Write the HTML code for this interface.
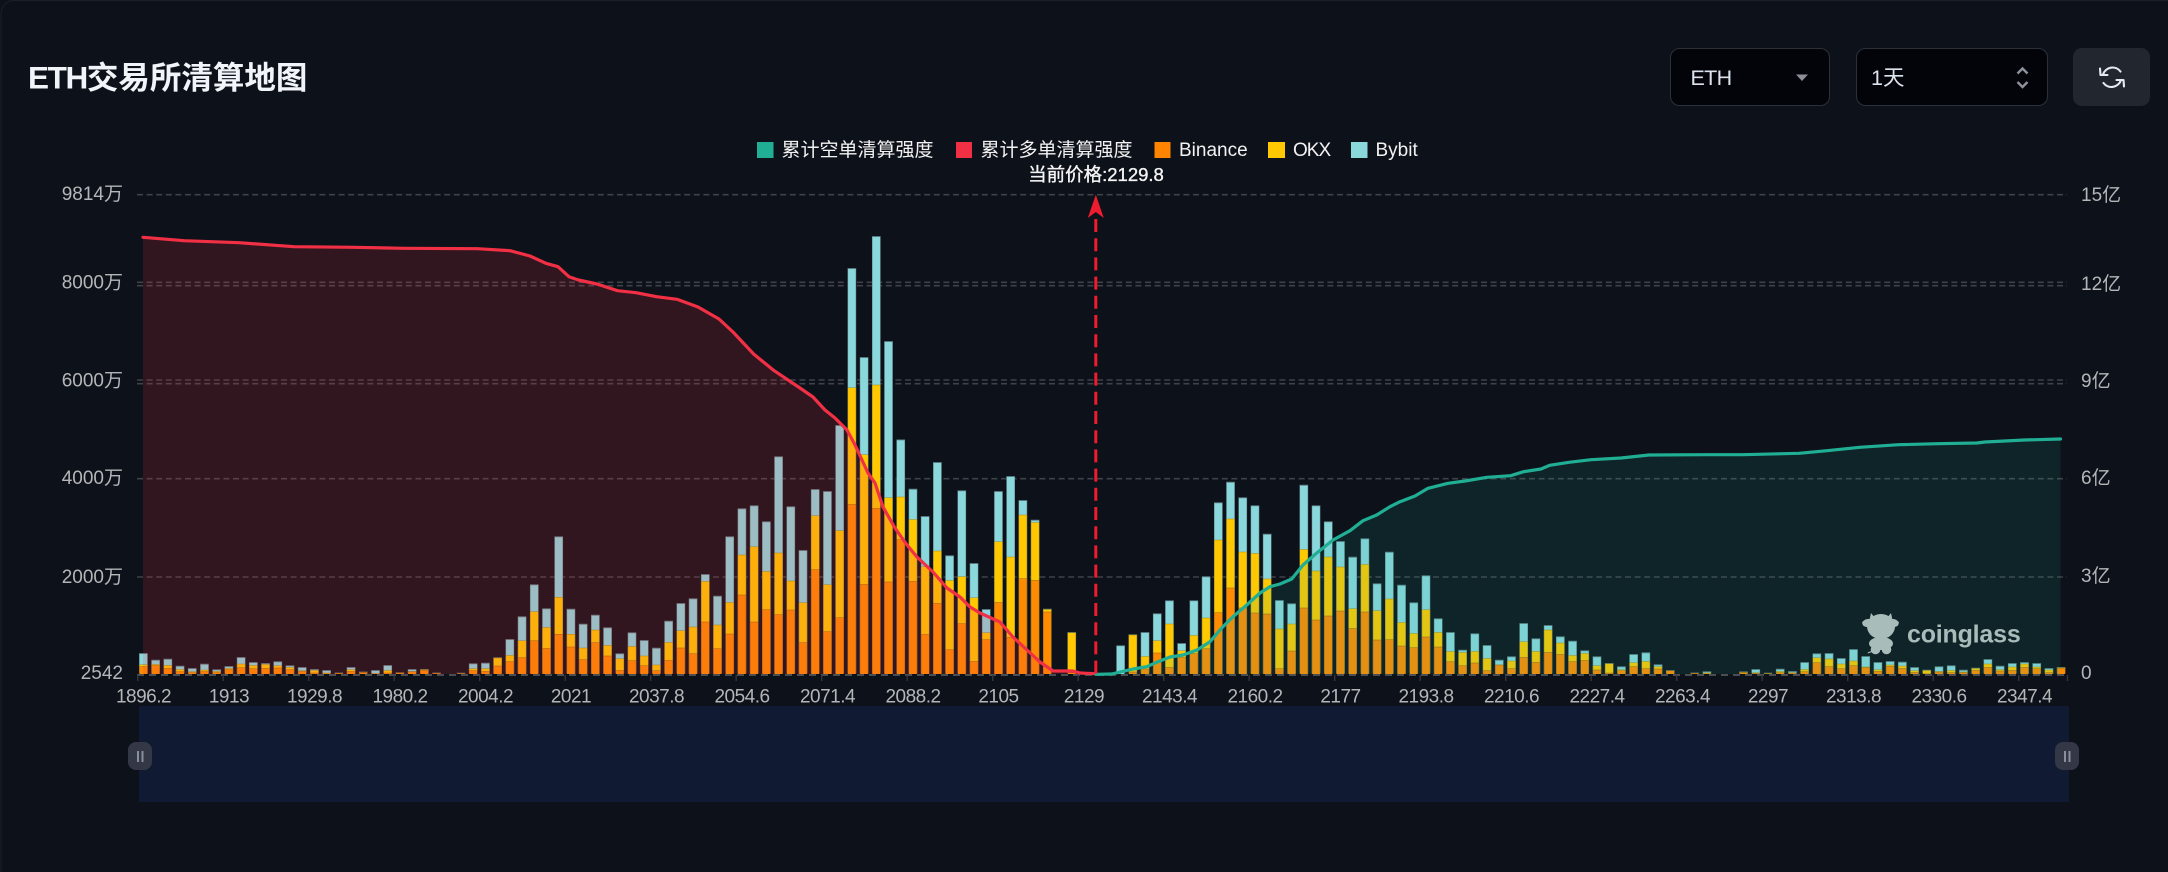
<!DOCTYPE html>
<html lang="zh">
<head>
<meta charset="utf-8">
<title>ETH交易所清算地图</title>
<style>
html,body{margin:0;padding:0;background:#0d1119;width:2168px;height:872px;overflow:hidden}
svg{display:block}
text{font-family:"Liberation Sans","Noto Sans CJK SC",sans-serif}
.ax{font-size:19px;fill:#b4b6b8}
.xl{font-size:19px;fill:#b4b6b8;text-anchor:middle;letter-spacing:-.5px}
.lg{font-size:19px;fill:#f2f2f2}
</style>
</head>
<body>
<svg width="2168" height="872" viewBox="0 0 2168 872" xmlns="http://www.w3.org/2000/svg">
<defs>
<path id="c" d="M0 0v-20m1 20v-13.3m1 13.3v-14.3m1 14.3v-7.3m1 7.3v-5m1 5v-9.3m1 9.3v-3.7m1 3.7v-7m1 7v-16m1 16v-11m1 11v-10m1 10v-11.7m1 11.7v-7.7m1 7.7v-6m1 6v-4m1 4v-3m1 3v-.5m1 .5v-6m1 6v-1.5m1 1.5v-3m1 3v-8m1 8v-.7m1 .7v-4m1 4v-4m1 4v-.5m1 .5m1 0v-.3m1 .3v-9.7m1 9.7v-10.3m1 10.3v-15.7m1 15.7v-34m1 34v-56.7m1 56.7v-88.7m1 88.7v-64.7m1 64.7v-136.7m1 136.7v-64.3m1 64.3v-49.3m1 49.3v-58.3m1 58.3v-45.7m1 45.7v-19.7m1 19.7v-40.7m1 40.7v-33m1 33v-25.3m1 25.3v-52.3m1 52.3v-70m1 70v-74.7m1 74.7v-99m1 99v-77.3m1 77.3v-136.7m1 136.7v-164.7m1 164.7v-167.7m1 167.7v-151.7m1 151.7v-216.7m1 216.7v-166.7m1 166.7v-123m1 123v-184m1 184v-182m1 182v-248m1 248v-405m1 405v-316m1 316v-437m1 437v-332m1 332v-233.6m1 233.6v-184.3m1 184.3v-157m1 157v-211m1 211v-117.7m1 117.7v-182.7m1 182.7v-110m1 110v-64m1 64v-182m1 182v-197m1 197v-173m1 173v-153.3m1 153.3v-64.3m1 64.3m1 0v-41m1 41m1 0m1 0m1 0v-27.7m1 27.7v-38.7m1 38.7v-41m1 41v-59.7m1 59.7v-72.7m1 72.7v-30m1 30v-72.7m1 72.7v-96.7m1 96.7v-170.7m1 170.7v-191.3m1 191.3v-175.7m1 175.7v-167.7m1 167.7v-139.3m1 139.3v-73m1 73v-69.7m1 69.7v-188.3m1 188.3v-167.7m1 167.7v-151.7m1 151.7v-132m1 132v-116.3m1 116.3v-134.7m1 134.7v-89.7m1 89.7v-121.3m1 121.3v-88.3m1 88.3v-70.7m1 70.7v-97.7m1 97.7v-54.7m1 54.7v-41m1 41v-23.3m1 23.3v-39.7m1 39.7v-28m1 28v-13.3m1 13.3v-16.7m1 16.7v-50m1 50v-34.7m1 34.7v-48m1 48v-36.7m1 36.7v-32.3m1 32.3v-22.7m1 22.7v-16.7m1 16.7v-10m1 10v-6.7m1 6.7v-19m1 19v-20.7m1 20.7v-8.7m1 8.7v-3m1 3m1 0v-.5m1 .5v-1.7m1 1.7m1 0m1 0v-1.6m1 1.6v-4m1 4v-.3m1 .3v-4.3m1 4.3v-2m1 2v-11m1 11v-19.7m1 19.7v-20m1 20v-15m1 15v-24m1 24v-17m1 17v-11m1 11v-12m1 12v-11.3m1 11.3v-6m1 6v-3.3m1 3.3v-6.7m1 6.7v-7.7m1 7.7v-3.3m1 3.3v-5.3m1 5.3v-14m1 14v-7.3m1 7.3v-10m1 10v-11m1 11v-10m1 10v-5m1 5v-6"/>
<path id="y" d="M0 0v-9m1 9v-9.3m1 9.3v-8.3m1 8.3v-4.3m1 4.3v-2m1 2v-3.7m1 3.7v-2.3m1 2.3v-5.3m1 5.3v-9.7m1 9.7v-8.3m1 8.3v-9.3m1 9.3v-8m1 8v-6.3m1 6.3v-3m1 3v-3.3m1 3.3v-.7m1 .7v-.5m1 .5v-4m1 4v-1.5m1 1.5v-.3m1 .3v-3.3m1 3.3v-.7m1 .7v-2.3m1 2.3v-4m1 4v-.5m1 .5m1 0v-.3m1 .3v-5m1 5v-5m1 5v-15.7m1 15.7v-18.3m1 18.3v-33m1 33v-62m1 62v-46.3m1 46.3v-76.5m1 76.5v-39.5m1 39.5v-25.7m1 25.7v-43.7m1 43.7v-28.3m1 28.3v-15m1 15v-27.3m1 27.3v-17.7m1 17.7v-8.7m1 8.7v-31.3m1 31.3v-43m1 43v-46.7m1 46.7v-92.3m1 92.3v-48.7m1 48.7v-71.3m1 71.3v-118.7m1 118.7v-127m1 127v-102.3m1 102.3v-120.7m1 120.7v-92.7m1 92.7v-71m1 71v-158m1 158v-89m1 89v-143m1 143v-286m1 286v-219m1 219v-288.7m1 288.7v-176m1 176v-176.7m1 176.7v-154.3m1 154.3v-107m1 107v-122.7m1 122.7v-93.3m1 93.3v-97m1 97v-76m1 76v-41m1 41v-132m1 132v-116.7m1 116.7v-158.7m1 158.7v-151.3m1 151.3v-64.3m1 64.3m1 0v-41m1 41m1 0m1 0m1 0m1 0v-38.7m1 38.7v-17.3m1 17.3v-33m1 33v-49.7m1 49.7v-23m1 23v-38.3m1 38.3v-55.7m1 55.7v-133.7m1 133.7v-154.7m1 154.7v-121.7m1 121.7v-120.3m1 120.3v-94.7m1 94.7v-44.7m1 44.7v-49.7m1 49.7v-124.3m1 124.3v-102.7m1 102.7v-116.7m1 116.7v-106.7m1 106.7v-65m1 65v-109.3m1 109.3v-63m1 63v-74.7m1 74.7v-51.3m1 51.3v-40.3m1 40.3v-64m1 64v-41.3m1 41.3v-22.3m1 22.3v-21.3m1 21.3v-22.3m1 22.3v-15.3m1 15.3v-8.7m1 8.7v-12.7m1 12.7v-32m1 32v-22.3m1 22.3v-43.7m1 43.7v-30.7m1 30.7v-18.3m1 18.3v-20.3m1 20.3v-8m1 8v-10m1 10v-4m1 4v-11m1 11v-12.3m1 12.3v-7m1 7v-3m1 3m1 0v-.5m1 .5v-.7m1 .7m1 0m1 0v-1.6m1 1.6v-1m1 1v-.3m1 .3v-2.3m1 2.3v-1m1 1v-4.3m1 4.3v-16m1 16v-14.7m1 14.7v-9.7m1 9.7v-12.7m1 12.7v-6.7m1 6.7v-4m1 4v-8.7m1 8.7v-7.7m1 7.7v-3m1 3v-3.3m1 3.3v-2.3m1 2.3v-3.3m1 3.3v-1.7m1 1.7v-5.3m1 5.3v-9.7m1 9.7v-4m1 4v-6.7m1 6.7v-9.7m1 9.7v-6.7m1 6.7v-3.7m1 3.7v-6"/>
<path id="o" d="M0 0v-7m1 7v-8m1 8v-5.3m1 5.3v-2m1 2v-1m1 1v-2m1 2v-1m1 1v-4m1 4v-6m1 6v-5m1 5v-5.3m1 5.3v-5.7m1 5.7v-4m1 4v-2.3m1 2.3v-.7m1 .7v-.3m1 .3v-.5m1 .5v-2.3m1 2.3v-1m1 1v-.2m1 .2v-.7m1 .7v-.7m1 .7v-2m1 2v-3.3m1 3.3v-.5m1 .5m1 0v-.3m1 .3v-3m1 3v-2.3m1 2.3v-7.7m1 7.7v-12m1 12v-16m1 16v-33m1 33v-25.3m1 25.3v-39.5m1 39.5v-26.7m1 26.7v-14m1 14v-31m1 31v-17.7m1 17.7v-3.3m1 3.3v-13m1 13v-8m1 8v-3m1 3v-13.3m1 13.3v-25.7m1 25.7v-20m1 20v-51.7m1 51.7v-25m1 25v-39.7m1 39.7v-78.7m1 78.7v-51.7m1 51.7v-64m1 64v-59m1 59v-63.7m1 63.7v-31m1 31v-104m1 104v-42m1 42v-56m1 56v-169.3m1 169.3v-89.3m1 89.3v-165.3m1 165.3v-91.7m1 91.7v-134m1 134v-92.3m1 92.3v-39.3m1 39.3v-70.3m1 70.3v-24m1 24v-50m1 50v-12.3m1 12.3v-34m1 34v-71.3m1 71.3v-36.3m1 36.3v-95m1 95v-93.3m1 93.3v-61.7m1 61.7m1 0v-1m1 1m1 0m1 0m1 0m1 0v-1.7m1 1.7v-4.7m1 4.7v-20.7m1 20.7v-6.3m1 6.3v-16.3m1 16.3v-20m1 20v-25m1 25v-61m1 61v-85.7m1 85.7v-65.7m1 65.7v-60.7m1 60.7v-59.7m1 59.7v-5m1 5v-22.7m1 22.7v-65.7m1 65.7v-53.7m1 53.7v-57.7m1 57.7v-62.7m1 62.7v-45.3m1 45.3v-61.7m1 61.7v-33.7m1 33.7v-34m1 34v-27.7m1 27.7v-26m1 26v-36.7m1 36.7v-26.7m1 26.7v-12m1 12v-8m1 8v-10.7m1 10.7v-3m1 3v-8.7m1 8.7v-5m1 5v-16.3m1 16.3v-11.3m1 11.3v-21.3m1 21.3v-19.3m1 19.3v-12m1 12v-13.3m1 13.3v-3.7m1 3.7v-.7m1 .7v-3m1 3v-7m1 7v-5m1 5v-4.7m1 4.7v-3m1 3m1 0v-.5m1 .5v-.3m1 .3m1 0m1 0v-1m1 1v-.5m1 .5v-.3m1 .3v-1m1 1v-.7m1 .7v-2m1 2v-11m1 11v-7m1 7v-5m1 5v-8m1 8v-6m1 6v-2.3m1 2.3v-7.3m1 7.3v-5.3m1 5.3v-1.3m1 1.3v-.3m1 .3v-1.7m1 1.7v-1m1 1v-1m1 1v-3.3m1 3.3v-6.3m1 6.3v-2.7m1 2.7v-3.3m1 3.3v-6.3m1 6.3v-5m1 5v-1m1 1v-5.3"/>
</defs>

<rect width="2168" height="872" fill="#0d1119"/>
<path d="M1 872V14A13 13 0 0 1 14 .5H2168" fill="none" stroke="#1c1f25" stroke-width="1"/>

<!-- title -->
<text x="28" y="88.5" font-size="31.5" font-weight="700" fill="#f1f4f8"><tspan letter-spacing="-1.4">ETH</tspan>交易所清算地图</text>

<!-- controls -->
<rect x="1670.5" y="48.5" width="159" height="57" rx="9" fill="#02040a" stroke="#2c3038"/>
<text x="1690.5" y="85" font-size="21.5" letter-spacing="-.7" fill="#dce3ec">ETH</text>
<polygon points="1796,74.5 1808,74.5 1802,81" fill="#8a8f98"/>
<rect x="1856.5" y="48.5" width="191" height="57" rx="9" fill="#02040a" stroke="#2c3038"/>
<text x="1871" y="85" font-size="21.5" fill="#dce3ec">1天</text>
<path d="M2017.5 73.5l5-5 5 5M2017.5 82l5 5 5-5" fill="none" stroke="#8d9199" stroke-width="2.4"/>
<rect x="2073" y="48" width="77" height="58" rx="9" fill="#22262f"/>
<g fill="none" stroke="#e6eaf0" stroke-width="2.1" stroke-linecap="round" stroke-linejoin="round">
<path d="M2103 74.5A10 10 0 0 1 2120.5 71.5"/>
<path d="M2100 68.5L2100.5 75H2107.5"/>
<path d="M2121 80A10 10 0 0 1 2103.5 83"/>
<path d="M2124 86.5L2123.5 80H2116.5"/>
</g>

<!-- legend -->
<rect x="757" y="142" width="16.5" height="16" fill="#20ae94"/>
<text class="lg" x="781.5" y="156">累计空单清算强度</text>
<rect x="956" y="142" width="16" height="16" fill="#f23045"/>
<text class="lg" x="980.5" y="156">累计多单清算强度</text>
<rect x="1154.5" y="142" width="16" height="16" fill="#ff8400"/>
<text class="lg" x="1179" y="156">Binance</text>
<rect x="1268" y="142" width="17" height="16" fill="#ffc800"/>
<text class="lg" x="1293" y="156" letter-spacing="-1">OKX</text>
<rect x="1351" y="142" width="16.5" height="16" fill="#8bd8dc"/>
<text class="lg" x="1375.5" y="156">Bybit</text>
<text x="1096" y="181" font-size="18.5" fill="#f5f5f5" stroke="#f5f5f5" stroke-width=".35" text-anchor="middle">当前价格:2129.8</text>

<!-- grid -->
<g fill="none" stroke="#3f4248" stroke-width="1.6" stroke-dasharray="6 3.6">
<path d="M137 194.7H2067M137 282.3H2067M137 285.7H2067M137 380H2067M137 383.7H2067M137 478.7H2067M137 577H2067"/>
</g>

<!-- axis labels -->
<g text-anchor="end">
<text class="ax" x="123" y="200">9814万</text>
<text class="ax" x="123" y="288.5">8000万</text>
<text class="ax" x="123" y="386.5">6000万</text>
<text class="ax" x="123" y="484">4000万</text>
<text class="ax" x="123" y="583">2000万</text>
<text class="ax" x="123" y="679">2542</text>
</g>
<text class="ax" x="2081" y="201">15亿</text>
<text class="ax" x="2081" y="290">12亿</text>
<text class="ax" x="2081" y="387">9亿</text>
<text class="ax" x="2081" y="484">6亿</text>
<text class="ax" x="2081" y="582">3亿</text>
<text class="ax" x="2081" y="679">0</text>

<!-- bars -->
<g transform="translate(143.4 674) scale(12.215 1)" fill="none">
<use href="#c" transform="translate(0 -.9)" stroke="#5f858a" stroke-width=".71"/>
<use href="#c" stroke="#8bd8dc" stroke-width=".62"/>
<use href="#y" transform="translate(0 -.5)" stroke="#a08c1c" stroke-width=".69"/>
<use href="#y" stroke="#ffc800" stroke-width=".62"/>
<use href="#o" transform="translate(0 -.5)" stroke="#9a5f10" stroke-width=".69"/>
<use href="#o" stroke="#ff8c00" stroke-width=".62"/>
</g>

<!-- logo -->
<g fill="#bcbfbf">
<ellipse cx="1881" cy="626.5" rx="14" ry="12.5"/>
<path d="M1862 622.5q3-4.5 9-3.5l2 8q-7 1-10-1.5zM1899 622.5q-3-4.5-9-3.5l-2 8q7 1 10-1.5zM1871 613l4 5-5.5 2zM1891 613l-4 5 5.5 2z"/>
<ellipse cx="1881" cy="643.5" rx="12" ry="6.5"/>
<ellipse cx="1875.5" cy="649.5" rx="4.8" ry="4.8"/>
<ellipse cx="1886.5" cy="649.5" rx="4.8" ry="4.8"/>
<path d="M1868 653.5l4-1.5 1-2-1-.5-1 1.6-3.4 1.4z"/>
<text x="1907" y="642.5" font-size="25" font-weight="700" letter-spacing="-.2" fill="#bcbfbf">coinglass</text>
</g>

<!-- areas -->
<polygon fill="#f23045" fill-opacity=".16" points="143,237.3 184,240.7 239,242.7 294,246.7 354,247.3 404,248.3 477.5,248.7 510,250.7 530,256 546,263.3 558,266.7 569,276.7 578.5,280 597,284 617.5,290.7 636,292.7 656.6,296.7 677,299.3 698,307 719,319 733,332 753.6,354 774,370.6 800,388 813,397 825,410 835,418 847,430 855,445 862,460 868,473 875,483 883,507 895,528 907,545 917,557 933,572 947,588 960,597 970,607 980,613 1000,622 1013,637 1027,650 1040,662 1053,671 1073,671 1080,673 1095,673.7 1095,674 143,674"/>
<polygon fill="#20ae94" fill-opacity=".125" points="1096,674.3 1111.7,674 1120,672 1133,669 1146.7,666.7 1158,661.7 1170,657 1183,655 1197,650 1210,641.7 1221.7,628 1233,616.7 1246.7,605 1260,593 1270,586.7 1280,584 1291.7,579 1303,565 1316.7,553 1333,540 1350,530.7 1363,520.7 1376.7,515 1390,506.7 1400,501.7 1415,496 1428,488.3 1448,483.3 1465,481 1487,477.3 1510.6,475.7 1523.6,471.7 1541,469 1549.6,465.3 1569,462.3 1591,459.7 1621,458 1649,455 1703.6,454.7 1742.6,454.7 1799,453.3 1827,450.7 1859.7,447.3 1898.7,444.7 1937.7,443.7 1976.7,443 1985,442 2024.5,440 2060.5,439 2060.5,674.3"/>

<!-- axis line & ticks -->
<path d="M137 675H2067" stroke="#4a4d52" stroke-width="2" stroke-dasharray="7 5" fill="none"/>
<path d="M137.7 675v6M223.2 675v6M308.7 675v6M394.2 675v6M479.7 675v6M565.2 675v6M650.7 675v6M736.2 675v6M821.7 675v6M907.2 675v6M992.7 675v6M1078.2 675v6M1163.7 675v6M1249.2 675v6M1334.7 675v6M1420.2 675v6M1505.7 675v6M1591.2 675v6M1676.7 675v6M1762.2 675v6M1847.7 675v6M1933.2 675v6M2018.7 675v6M2067.5 675v6" stroke="#33363c" stroke-width="1.4" fill="none"/>

<!-- x labels -->
<text class="xl" x="143.5" y="702.5">1896.2</text>
<text class="xl" x="229" y="702.5">1913</text>
<text class="xl" x="314.5" y="702.5">1929.8</text>
<text class="xl" x="400" y="702.5">1980.2</text>
<text class="xl" x="485.5" y="702.5">2004.2</text>
<text class="xl" x="571" y="702.5">2021</text>
<text class="xl" x="656.5" y="702.5">2037.8</text>
<text class="xl" x="742" y="702.5">2054.6</text>
<text class="xl" x="827.5" y="702.5">2071.4</text>
<text class="xl" x="913" y="702.5">2088.2</text>
<text class="xl" x="998.5" y="702.5">2105</text>
<text class="xl" x="1084" y="702.5">2129</text>
<text class="xl" x="1169.5" y="702.5">2143.4</text>
<text class="xl" x="1255" y="702.5">2160.2</text>
<text class="xl" x="1340.5" y="702.5">2177</text>
<text class="xl" x="1426" y="702.5">2193.8</text>
<text class="xl" x="1511.5" y="702.5">2210.6</text>
<text class="xl" x="1597" y="702.5">2227.4</text>
<text class="xl" x="1682.5" y="702.5">2263.4</text>
<text class="xl" x="1768" y="702.5">2297</text>
<text class="xl" x="1853.5" y="702.5">2313.8</text>
<text class="xl" x="1939" y="702.5">2330.6</text>
<text class="xl" x="2024.5" y="702.5">2347.4</text>

<!-- lines -->
<polyline fill="none" stroke="#f23045" stroke-width="3.2" stroke-linejoin="round" stroke-linecap="round" points="143,237.3 184,240.7 239,242.7 294,246.7 354,247.3 404,248.3 477.5,248.7 510,250.7 530,256 546,263.3 558,266.7 569,276.7 578.5,280 597,284 617.5,290.7 636,292.7 656.6,296.7 677,299.3 698,307 719,319 733,332 753.6,354 774,370.6 800,388 813,397 825,410 835,418 847,430 855,445 862,460 868,473 875,483 883,507 895,528 907,545 917,557 933,572 947,588 960,597 970,607 980,613 1000,622 1013,637 1027,650 1040,662 1053,671 1073,671 1080,673 1095,673.7"/>
<polyline fill="none" stroke="#20ae94" stroke-width="3.2" stroke-linejoin="round" stroke-linecap="round" points="1096,674.3 1111.7,674 1120,672 1133,669 1146.7,666.7 1158,661.7 1170,657 1183,655 1197,650 1210,641.7 1221.7,628 1233,616.7 1246.7,605 1260,593 1270,586.7 1280,584 1291.7,579 1303,565 1316.7,553 1333,540 1350,530.7 1363,520.7 1376.7,515 1390,506.7 1400,501.7 1415,496 1428,488.3 1448,483.3 1465,481 1487,477.3 1510.6,475.7 1523.6,471.7 1541,469 1549.6,465.3 1569,462.3 1591,459.7 1621,458 1649,455 1703.6,454.7 1742.6,454.7 1799,453.3 1827,450.7 1859.7,447.3 1898.7,444.7 1937.7,443.7 1976.7,443 1985,442 2024.5,440 2060.5,439"/>

<!-- current price marker -->
<path d="M1095.8 219V674" fill="none" stroke="#ee1c2e" stroke-width="3" stroke-dasharray="13 6.2"/>
<path d="M1095.8 194.7L1103.8 218L1095.8 212L1087.8 218Z" fill="#ee1c2e"/>

<!-- slider -->
<rect x="139" y="706" width="1930" height="96" fill="#111a33"/>
<rect x="128" y="742" width="24" height="28" rx="8" fill="#333746"/>
<rect x="137" y="751" width="2" height="11" fill="#8a8f9c"/>
<rect x="141.5" y="751" width="2" height="11" fill="#8a8f9c"/>
<rect x="2055" y="742" width="24" height="28" rx="8" fill="#333746"/>
<rect x="2064" y="751" width="2" height="11" fill="#8a8f9c"/>
<rect x="2068.5" y="751" width="2" height="11" fill="#8a8f9c"/>
</svg>
</body>
</html>
